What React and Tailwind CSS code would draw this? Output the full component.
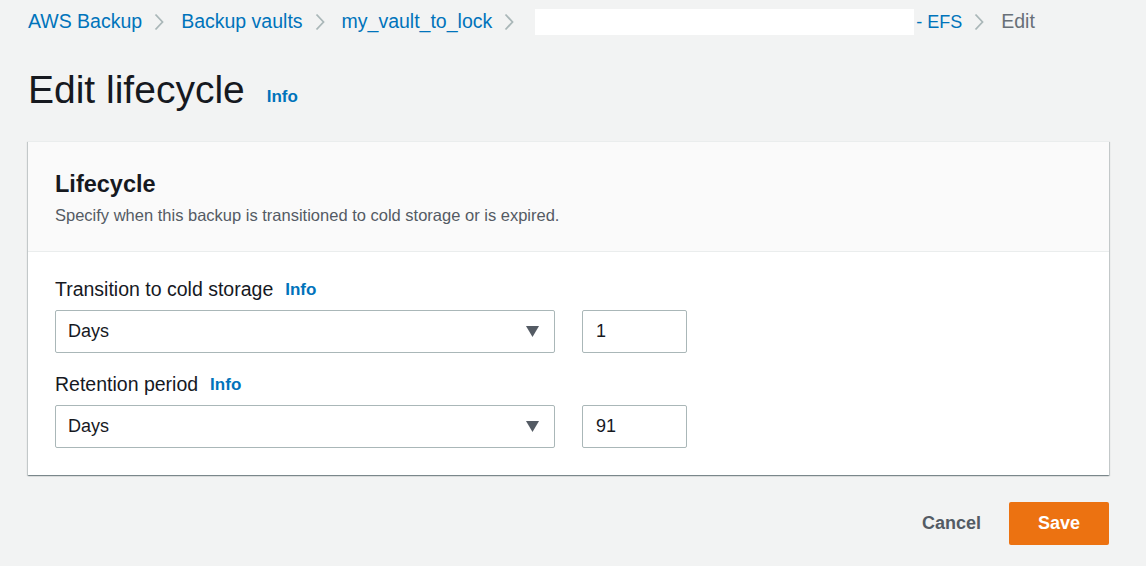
import React from "react";

const crumbs = ["AWS Backup", "Backup vaults", "my_vault_to_lock"];

const Chevron = () => (
  <svg width="10" height="18" viewBox="0 0 10 18" className="ml-[12px] mr-[17px]">
    <path d="M1.5 1.5l7 7.5-7 7.5" fill="none" stroke="#aab7b8" strokeWidth="1.8" />
  </svg>
);

const Caret = () => (
  <svg width="13" height="11" viewBox="0 0 13 11">
    <path d="M0 0h13L6.5 11z" fill="#545b64" />
  </svg>
);

const Field = ({ label, value }) => (
  <div>
    <div className="flex items-center h-[24px] text-[19.5px] text-[#16191f]">
      {label}
      <span className="ml-[12px] text-[17px] font-bold text-[#0073bb]">Info</span>
    </div>
    <div className="mt-[8px] flex gap-[27px]">
      <div className="w-[500px] h-[43px] border border-[#aab7b8] rounded-[2px] bg-white flex items-center justify-between pl-[12px] pr-[15px] text-[18px] text-[#16191f]">
        Days
        <Caret />
      </div>
      <div className="w-[105px] h-[43px] border border-[#aab7b8] rounded-[2px] bg-white flex items-center px-[13px] text-[18px] text-[#16191f]">
        {value}
      </div>
    </div>
  </div>
);

export default function App() {
  return (
    <div
      className="min-h-screen bg-[#f2f3f3] pl-[28px] pr-[37px] pt-[9px] pb-[20px]"
      style={{ fontFamily: '"Liberation Sans", Arial, sans-serif' }}
    >
      {/* Breadcrumbs */}
      <div className="flex items-center h-[26px] text-[19.5px]">
        {crumbs.map((c) => (
          <React.Fragment key={c}>
            <span className="text-[#0073bb]">{c}</span>
            <Chevron />
          </React.Fragment>
        ))}
        <span className="ml-[4px] w-[379px] h-[26px] bg-white" />
        <span className="ml-[2px] text-[18px] text-[#0073bb]">- EFS</span>
        <Chevron />
        <span className="text-[#687078]">Edit</span>
      </div>

      {/* Title */}
      <div className="mt-[33px] flex items-center h-[44px]">
        <h1 className="text-[39px] text-[#16191f]">Edit lifecycle</h1>
        <span className="ml-[22px] mt-[14px] text-[17px] font-bold text-[#0073bb]">Info</span>
      </div>

      {/* Card */}
      <div className="mt-[29px] bg-white border-t border-[#eaeded] shadow-[0_1px_1px_0_rgba(0,28,36,0.3),1px_1px_1px_0_rgba(0,28,36,0.15),-1px_1px_1px_0_rgba(0,28,36,0.15)]">
        <div className="bg-[#fafafa] border-b border-[#eaeded] px-[27px] pt-[29px] pb-[26px]">
          <h2 className="h-[28px] flex items-center text-[23.5px] font-bold text-[#16191f]">Lifecycle</h2>
          <p className="mt-[6px] h-[20px] flex items-center text-[16.5px] text-[#545b64]">
            Specify when this backup is transitioned to cold storage or is expired.
          </p>
        </div>
        <div className="px-[27px] pt-[26px] pb-[27px] flex flex-col gap-[20px]">
          <Field label="Transition to cold storage" value="1" />
          <Field label="Retention period" value="91" />
        </div>
      </div>

      {/* Actions */}
      <div className="mt-[27px] flex justify-end items-center gap-[28px]">
        <span className="text-[18px] font-bold text-[#545b64]">Cancel</span>
        <button className="w-[100px] h-[43px] bg-[#ec7211] text-white text-[18px] font-bold rounded-[2px]">
          Save
        </button>
      </div>
    </div>
  );
}
